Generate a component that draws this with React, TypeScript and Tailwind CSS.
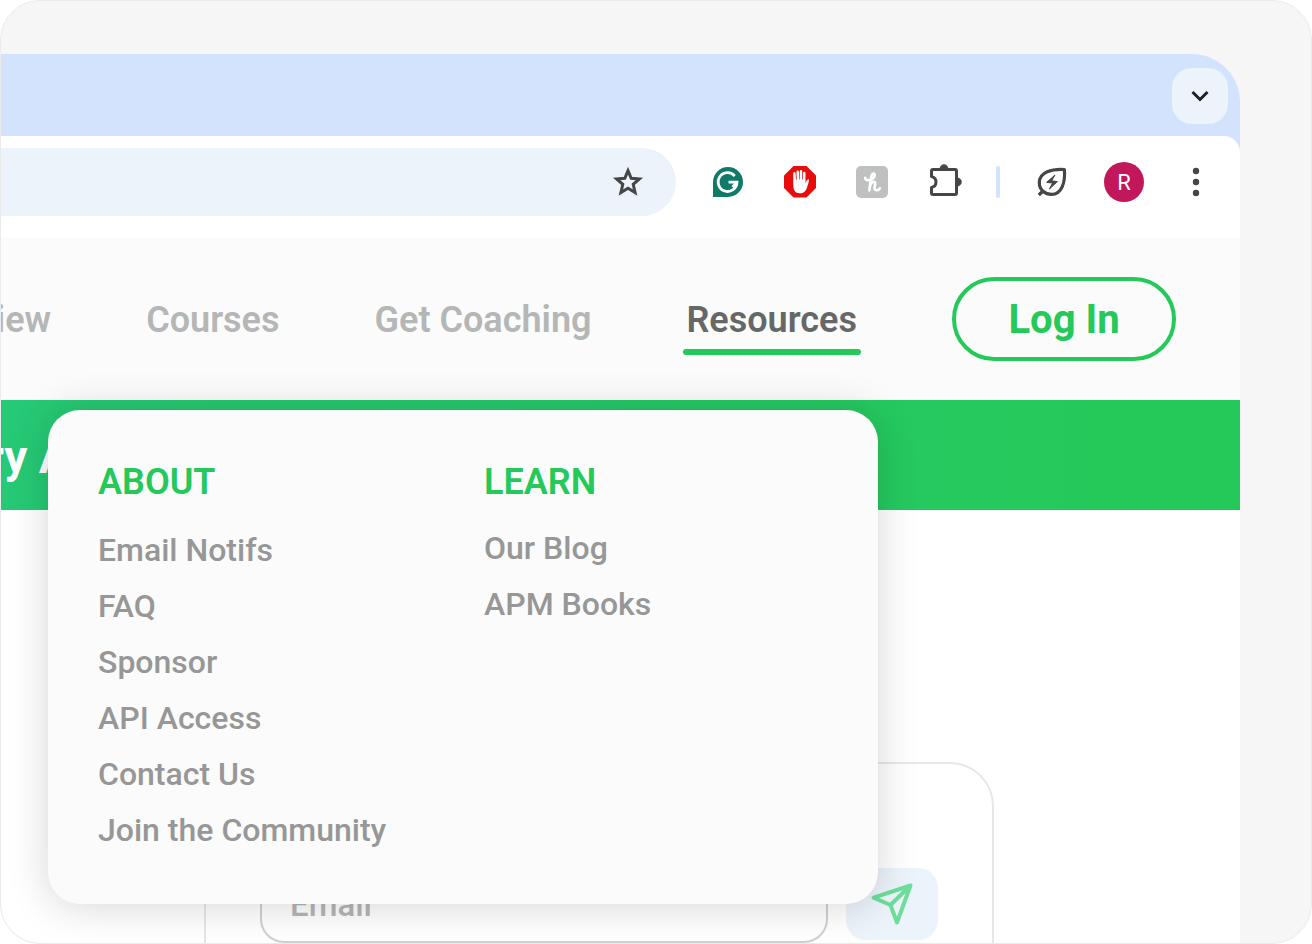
import React from "react";

const aboutLinks = ["Email Notifs", "FAQ", "Sponsor", "API Access", "Contact Us", "Join the Community"];
const learnLinks = ["Our Blog", "APM Books"];

function ToolButton({ label, children }: { label: string; children: React.ReactNode }) {
  return (
    <button type="button" aria-label={label} className="flex h-12 w-18 items-center justify-center">
      {children}
    </button>
  );
}

function StarIcon() {
  return (
    <svg width="36" height="36" viewBox="0 0 36 36" fill="none">
      <path
        d="M18 6.6L21.2 14.3L29.4 15L23.2 20.4L25.1 28.5L18 24.2L10.9 28.5L12.8 20.4L6.6 15L14.8 14.3Z"
        stroke="#454746"
        strokeWidth="3"
        strokeMiterlimit="10"
      />
    </svg>
  );
}

function GrammarIcon() {
  return (
    <svg width="32" height="32" viewBox="0 0 32 32" fill="none">
      <path d="M16 1A15 15 0 1 1 16 31H1V16A15 15 0 0 1 16 1Z" fill="#107a68" />
      <path d="M22.8 10A9.4 9.4 0 1 0 25 16.2H16.5M24.5 17L20.5 21" stroke="#fff" strokeWidth="2.8" />
    </svg>
  );
}

function HandIcon() {
  return (
    <svg width="32" height="32" viewBox="0 0 32 32">
      <path d="M9.5 0H22.5L32 9.5V22L22.5 31.5H9.5L0 22V9.5Z" fill="#e80d0d" />
      <path d="M10.4 7.6L10.8 18M13.7 5.8L14 16M17 5.2V16M20.3 7L20.1 18" stroke="#fff" strokeWidth="2.5" strokeLinecap="round" />
      <path d="M9.4 13.5H21.3V17.8C22 15.4 23.2 13 24.6 13.2C25.6 13.5 24.2 18 23 21.4C21.6 25.4 19.7 27.2 15.8 27.2C11.6 27.2 9.4 24.6 9.4 20Z" fill="#fff" />
    </svg>
  );
}

function HoneyIcon() {
  return (
    <svg width="32" height="32" viewBox="0 0 32 32" fill="none">
      <rect width="32" height="32" rx="5" fill="#bfc1c0" />
      <path
        d="M9.2 11.8C9 15 15.4 15.6 18.3 10.8C19.8 7.2 16.4 6 15.3 10.2L13.3 24.4C13.8 20 15.6 15.8 18 15.8C20.4 15.8 18.6 19.6 18.6 22C18.6 25.2 22.4 24.8 23.9 22.4"
        stroke="#fff"
        strokeWidth="2.6"
        strokeLinecap="round"
        strokeLinejoin="round"
      />
    </svg>
  );
}

function ExtensionIcon() {
  return (
    <svg width="40" height="40" viewBox="0 0 40 40" fill="none">
      <path
        d="M7.5 14.6V9Q7.5 7.5 9 7.5H31Q32.5 7.5 32.5 9V31Q32.5 32.5 31 32.5H9Q7.5 32.5 7.5 31V25.4A5.5 5.5 0 0 0 7.5 14.6Z"
        stroke="#454746"
        strokeWidth="3"
        strokeLinejoin="round"
      />
      <path d="M15.8 7A4.2 4.6 0 0 1 24.2 7ZM33 15.8A4.6 4.2 0 0 1 33 24.2Z" fill="#454746" stroke="#454746" strokeWidth="0.4" />
    </svg>
  );
}

function LeafIcon() {
  return (
    <svg width="40" height="40" viewBox="0 0 40 40" fill="none" stroke="#454746">
      <path d="M32.4 7.5C20 6.8 7.3 10 7.3 20.8C7.3 28 13 32.4 19.5 32.4C30 32.4 33.4 20 32.4 7.5ZM6.8 33L11.5 28.5" strokeWidth="3.2" strokeLinejoin="round" />
      <path d="M23 13L14.6 20.4L20.6 21L17.4 27L25.4 19.6L19.6 18.8Z" fill="#454746" strokeWidth="1" strokeLinejoin="round" />
    </svg>
  );
}

function LinkColumn({ title, links, gap }: { title: string; links: string[]; gap: string }) {
  return (
    <section className={`flex w-[386px] flex-col ${gap}`}>
      <h2 className="text-4xl leading-11 font-semibold text-[#25c95a]">{title}</h2>
      <ul>
        {links.map((link) => (
          <li key={link} className="h-14">
            <a href="#" className="text-[32px] leading-14 font-medium whitespace-nowrap text-[#969796]">
              {link}
            </a>
          </li>
        ))}
      </ul>
    </section>
  );
}

export default function App() {
  return (
    <div className="flex h-screen overflow-hidden rounded-[40px] border border-[#ebebeb] bg-[#f6f6f6] pt-[53px] pr-[71px] font-[Roboto,sans-serif]">
      <div className="flex min-w-0 flex-1 flex-col overflow-hidden rounded-tr-[48px] bg-[#d3e3fd]">
        <div className="flex h-[82px] shrink-0 items-start justify-end pt-3.5 pr-3">
          <button type="button" aria-label="Search tabs" className="flex size-14 items-center justify-center rounded-[20px] bg-[#ecf3fb]">
            <svg width="24" height="24" viewBox="0 0 24 24" fill="none" stroke="#1f1f1f" strokeWidth="3">
              <path d="M4.5 8L12 15.5L19.5 8" />
            </svg>
          </button>
        </div>

        <header className="flex h-[102px] shrink-0 items-start rounded-tr-2xl bg-white pt-3 pr-2">
          <div className="flex h-[68px] flex-1 items-center justify-end rounded-r-full bg-[#ecf3fb] pr-[30px]">
            <button type="button" aria-label="Bookmark this page">
              <StarIcon />
            </button>
          </div>
          <div className="ml-4 flex h-[68px] items-center">
            <ToolButton label="Grammar checker"><GrammarIcon /></ToolButton>
            <ToolButton label="Ad blocker"><HandIcon /></ToolButton>
            <ToolButton label="Coupons"><HoneyIcon /></ToolButton>
            <ToolButton label="Extensions"><ExtensionIcon /></ToolButton>
            <div className="mx-4 h-8 w-1 rounded-full bg-[#d3e3fd]" />
            <ToolButton label="Energy saver"><LeafIcon /></ToolButton>
            <ToolButton label="Profile">
              <span className="flex size-10 items-center justify-center rounded-full bg-[#c2185b] text-[22px] text-white">R</span>
            </ToolButton>
            <ToolButton label="Menu">
              <svg width="8" height="32" viewBox="0 0 8 32" fill="#454746">
                <circle cx="4" cy="5" r="3.2" />
                <circle cx="4" cy="16" r="3.2" />
                <circle cx="4" cy="27" r="3.2" />
              </svg>
            </ToolButton>
          </div>
        </header>

        <nav className="flex h-[162px] shrink-0 items-center justify-end gap-[95px] bg-[#fbfbfb] pr-16 text-4xl leading-11 font-semibold whitespace-nowrap text-[#b5b6b6]">
          <a href="#" className="pt-0.5">Review</a>
          <a href="#" className="pt-0.5">Courses</a>
          <a href="#" className="pt-0.5">Get Coaching</a>
          <a href="#" className="relative pt-0.5 text-[#666867]">
            Resources
            <span className="absolute -inset-x-1 -bottom-[13px] h-1.5 rounded-full bg-[#25c95a]" />
          </a>
          <button type="button" className="h-[84px] w-56 shrink-0 rounded-full border-4 border-[#25c95a] pt-0.5 text-[40px] font-bold text-[#25c95a]">
            Log In
          </button>
        </nav>

        <div className="relative flex h-[110px] shrink-0 items-center bg-linear-to-r from-[#26c976] to-[#25c95a] to-90%">
          <p className="-ml-3.5 pt-1 text-[46px] font-bold whitespace-nowrap text-white">ry A</p>
          <div className="absolute top-[10px] left-[47px] flex h-[494px] w-[830px] rounded-[32px] bg-[#fbfbfb] pt-[50px] pl-[50px] shadow-[0_2px_40px_rgba(0,0,0,0.17)]">
            <LinkColumn title="ABOUT" links={aboutLinks} gap="gap-[18px]" />
            <LinkColumn title="LEARN" links={learnLinks} gap="gap-4" />
          </div>
        </div>

        <main className="flex-1 bg-white pt-[252px] pl-[203px]">
          <form className="flex w-[790px] items-center gap-[18px] rounded-[44px] border-2 border-[#e6e7e7] px-[54px] pt-[101px] pb-20">
            <input
              type="email"
              aria-label="Email"
              placeholder="Email"
              className="h-[78px] w-[568px] rounded-3xl border-2 border-[#cdd1d0] px-7 text-[33px] font-medium placeholder:text-[#b5b6b6]"
            />
            <button type="button" aria-label="Send" className="flex h-[72px] w-[92px] shrink-0 items-center justify-center rounded-[20px] bg-[#ecf3fb]">
              <svg width="48" height="48" viewBox="0 0 48 48" fill="none" stroke="#6fdd9b" strokeWidth="4" strokeLinejoin="round">
                <path d="M42.5 5.5L5.5 17.7L22.5 25L29 42.5ZM22.5 25L42.5 5.5" />
              </svg>
            </button>
          </form>
        </main>
      </div>
    </div>
  );
}
